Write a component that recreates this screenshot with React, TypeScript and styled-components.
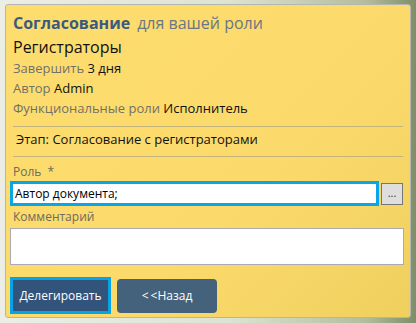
import React from 'react';
import styled, { createGlobalStyle } from 'styled-components';

const GlobalStyle = createGlobalStyle`
  html, body {
    margin: 0;
    padding: 0;
  }
  body {
    width: 416px;
    height: 323px;
    overflow: hidden;
    font-family: "Open Sans", "Noto Sans", sans-serif;
    background: linear-gradient(90deg, #eceee6 0%, #dde3d2 55%, #b3bd9c 88%, #7d8e68 100%);
  }
`;

const Card = styled.div`
  box-sizing: border-box;
  margin: 4px 0 0 5px;
  width: 406px;
  height: 314px;
  border: 1px solid #b4b4b0;
  border-radius: 3px;
  background: linear-gradient(135deg, #fedd6f 0%, #fbda6b 60%, #efd05e 100%);
  padding: 7px 7px 0 7px;
  display: flex;
  flex-direction: column;
`;

const Title = styled.div`
  font-size: 16px;
  line-height: 22px;
  margin-bottom: 2px;
  white-space: nowrap;
`;

const Strong = styled.span`
  font-weight: 700;
  color: #3a5a7e;
  margin-right: 7px;
`;

const Muted = styled.span`
  color: #6a7684;
`;

const Name = styled.div`
  font-size: 16px;
  line-height: 22px;
  color: #111;
`;

const Info = styled.div`
  font-size: 13px;
  line-height: 20px;
  color: #111;
  white-space: nowrap;
`;

const Label = styled.span`
  color: #737068;
`;

const Stage = styled.div`
  margin-top: 8px;
  border-top: 1px solid #c3b47c;
  border-bottom: 1px solid #c3b47c;
  padding: 4px 3px 9px;
  font-size: 13px;
  line-height: 16px;
  color: #111;
`;

const FieldLabel = styled.div<{ $gap: number }>`
  margin-top: ${p => p.$gap}px;
  font-size: 12px;
  line-height: 16px;
  color: #6e6a60;
`;

const Star = styled.span`
  margin-left: 6px;
`;

const FieldRow = styled.div`
  display: flex;
  align-items: center;
  gap: 2px;
  margin: 1px 0 0 -3px;
`;

const RoleInput = styled.div`
  box-sizing: border-box;
  width: 370px;
  height: 25px;
  border: 3px solid #0aa5e6;
  background: #fff;
  font-size: 12px;
  line-height: 19px;
  padding-left: 2px;
  color: #000;
`;

const PickButton = styled.div`
  box-sizing: border-box;
  width: 22px;
  height: 22px;
  border: 1px solid #767676;
  background: #dedede;
  font-size: 11px;
  line-height: 18px;
  text-align: center;
  color: #333;
`;

const Comment = styled.div`
  box-sizing: border-box;
  margin: 3px 0 0 -3px;
  width: 394px;
  height: 37px;
  border: 1px solid #a9aab4;
  background: #fff;
`;

const Buttons = styled.div`
  display: flex;
  align-items: center;
  gap: 6px;
  margin: 12px 0 0 -3px;
`;

const Button = styled.div<{ $active?: boolean }>`
  box-sizing: border-box;
  width: ${p => (p.$active ? 101 : 100)}px;
  height: ${p => (p.$active ? 37 : 34)}px;
  border-radius: ${p => (p.$active ? 0 : 4)}px;
  border: ${p => (p.$active ? '3px solid #05a4e6' : 'none')};
  background: ${p => (p.$active ? '#32537a' : '#44627b')};
  color: #fff;
  font-size: 12px;
  display: flex;
  align-items: center;
  justify-content: center;
`;

const Arrow = styled.span`
  letter-spacing: 2px;
`;

export default function App() {
  return (
    <>
      <GlobalStyle />
      <Card>
        <Title>
          <Strong>Согласование</Strong>
          <Muted>для вашей роли</Muted>
        </Title>
        <Name>Регистраторы</Name>
        <Info>
          <Label>Завершить</Label> 3 дня
        </Info>
        <Info>
          <Label>Автор</Label> Admin
        </Info>
        <Info>
          <Label>Функциональные роли</Label> Исполнитель
        </Info>
        <Stage>Этап: Согласование с регистраторами</Stage>
        <FieldLabel $gap={7}>
          Роль<Star>*</Star>
        </FieldLabel>
        <FieldRow>
          <RoleInput>Автор документа;</RoleInput>
          <PickButton>...</PickButton>
        </FieldRow>
        <FieldLabel $gap={3}>Комментарий</FieldLabel>
        <Comment />
        <Buttons>
          <Button $active>Делегировать</Button>
          <Button>
            <Arrow>&lt;</Arrow>&lt;Назад
          </Button>
        </Buttons>
      </Card>
    </>
  );
}
